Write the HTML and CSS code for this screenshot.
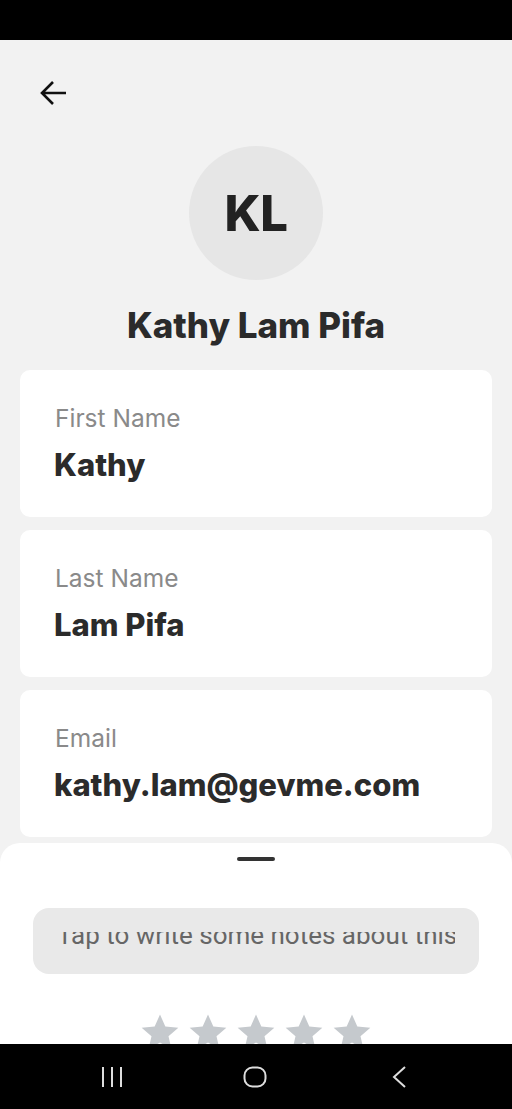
FILE: index.html
```html
<!DOCTYPE html>
<html lang="en">
<head>
    <meta charset="UTF-8">
    <meta name="viewport" content="width=device-width, initial-scale=1.0">
    <title>Contact</title>
    <link rel="stylesheet" href="styles.css">
</head>
<body>
    <div class="phone">
        <div class="status-bar"></div>

        <main class="screen">
            <div class="content">
                <div class="header">
                    <button class="back-btn" aria-label="Back">
                        <svg width="28" height="28" viewBox="0 0 28 28">
                            <path d="M27 14H3M14 3L3 14l11 11" fill="none" stroke="#111" stroke-width="2.6"/>
                        </svg>
                    </button>
                </div>

                <div class="avatar">KL</div>
                <h1 class="full-name">Kathy Lam Pifa</h1>

                <div class="field-card">
                    <div class="field-label">First Name</div>
                    <div class="field-value">Kathy</div>
                </div>
                <div class="field-card">
                    <div class="field-label">Last Name</div>
                    <div class="field-value">Lam Pifa</div>
                </div>
                <div class="field-card">
                    <div class="field-label">Email</div>
                    <div class="field-value">kathy.lam@gevme.com</div>
                </div>
            </div>

            <!-- notes sheet, pulled up from the bottom -->
            <div class="sheet">
                <div class="sheet-handle"></div>
                <div class="notes-box">
                    <div class="notes-scroll">
                        <p class="notes-text">Tap to write some notes about this</p>
                    </div>
                </div>
                <div class="stars">
                    <svg class="star" viewBox="0 0 24 24"><path d="M12 1.5l3.2 7.2 7.8.7-5.9 5.2 1.8 7.7L12 18.3l-6.9 4 1.8-7.7L1 9.4l7.8-.7z"/></svg>
                    <svg class="star" viewBox="0 0 24 24"><path d="M12 1.5l3.2 7.2 7.8.7-5.9 5.2 1.8 7.7L12 18.3l-6.9 4 1.8-7.7L1 9.4l7.8-.7z"/></svg>
                    <svg class="star" viewBox="0 0 24 24"><path d="M12 1.5l3.2 7.2 7.8.7-5.9 5.2 1.8 7.7L12 18.3l-6.9 4 1.8-7.7L1 9.4l7.8-.7z"/></svg>
                    <svg class="star" viewBox="0 0 24 24"><path d="M12 1.5l3.2 7.2 7.8.7-5.9 5.2 1.8 7.7L12 18.3l-6.9 4 1.8-7.7L1 9.4l7.8-.7z"/></svg>
                    <svg class="star" viewBox="0 0 24 24"><path d="M12 1.5l3.2 7.2 7.8.7-5.9 5.2 1.8 7.7L12 18.3l-6.9 4 1.8-7.7L1 9.4l7.8-.7z"/></svg>
                </div>
            </div>
        </main>

        <nav class="nav-bar">
            <svg class="nav-recent" width="22" height="22" viewBox="0 0 22 22">
                <path d="M2 1v20M11 1v20M20 1v20" stroke="#ddd" stroke-width="2"/>
            </svg>
            <svg class="nav-home" width="24" height="22" viewBox="0 0 24 22">
                <rect x="1.5" y="1.5" width="21" height="19" rx="8" fill="none" stroke="#ddd" stroke-width="2"/>
            </svg>
            <svg class="nav-back" width="16" height="22" viewBox="0 0 16 22">
                <path d="M14 1L3 11l11 10" fill="none" stroke="#ddd" stroke-width="2"/>
            </svg>
        </nav>
    </div>
</body>
</html>
```

FILE: styles.css
```css
* {
    box-sizing: border-box;
}
body {
    margin: 0;
    font-family: Inter, "Noto Sans", sans-serif;
    background-color: #000;
}
.phone {
    width: 512px;
    height: 1109px;
    display: flex;
    flex-direction: column;
    overflow: hidden;
}
.status-bar {
    height: 40px;
    background-color: #000;
    flex-shrink: 0;
}
.screen {
    flex: 1;
    display: flex;
    flex-direction: column;
    background-color: #f2f2f2;
    overflow: hidden;
}
.content {
    padding: 0 20px;
}
.header {
    height: 106px;
    display: flex;
    align-items: center;
    padding-left: 19px;
}
.back-btn {
    background: none;
    border: none;
    padding: 0;
    display: flex;
}
.avatar {
    width: 134px;
    height: 134px;
    margin: 0 auto;
    border-radius: 50%;
    background-color: #e6e6e6;
    color: #222;
    font-size: 49px;
    font-weight: 800;
    display: flex;
    align-items: center;
    justify-content: center;
    letter-spacing: -0.5px;
}
.full-name {
    margin: 25px 0 25px;
    text-align: center;
    font-size: 35px;
    line-height: 40px;
    font-weight: 800;
    color: #2b2b2b;
}
.field-card {
    background-color: #fff;
    border-radius: 10px;
    padding: 33px 34px;
    margin-bottom: 13px;
    height: 147px;
}
.field-label {
    font-size: 24.5px;
    line-height: 30px;
    color: #8a8a8a;
    margin-left: 1px;
}
.field-value {
    margin-top: 13px;
    font-size: 31px;
    line-height: 38px;
    font-weight: 800;
    color: #2b2b2b;
}
.sheet {
    margin-top: -7px;
    flex: 1;
    background-color: #fff;
    border-radius: 20px 20px 0 0;
    overflow: hidden;
    padding-top: 14px;
}
.sheet-handle {
    width: 38px;
    height: 4px;
    border-radius: 2px;
    background-color: #333;
    margin: 0 auto;
}
.notes-box {
    margin: 47px 33px 0 33px;
    height: 66px;
    border-radius: 16px;
    background-color: #e9e9e9;
    padding: 24px 24px 0 24px;
}
.notes-scroll {
    height: 20px;
    overflow: hidden;
}
.notes-text {
    margin: -12px 0 0;
    font-family: Roboto, "Liberation Sans", sans-serif;
    font-size: 26px;
    line-height: 30px;
    color: #666;
    white-space: nowrap;
}
.stars {
    margin-top: 38px;
    display: flex;
    justify-content: center;
    gap: 8px;
}
.star {
    width: 40px;
    height: 40px;
    fill: #c5c9cd;
}
.nav-bar {
    height: 65px;
    flex-shrink: 0;
    background-color: #000;
    display: flex;
    align-items: center;
    padding-left: 101px;
}
.nav-home {
    margin-left: 120px;
}
.nav-back {
    margin-left: 124px;
}
```
